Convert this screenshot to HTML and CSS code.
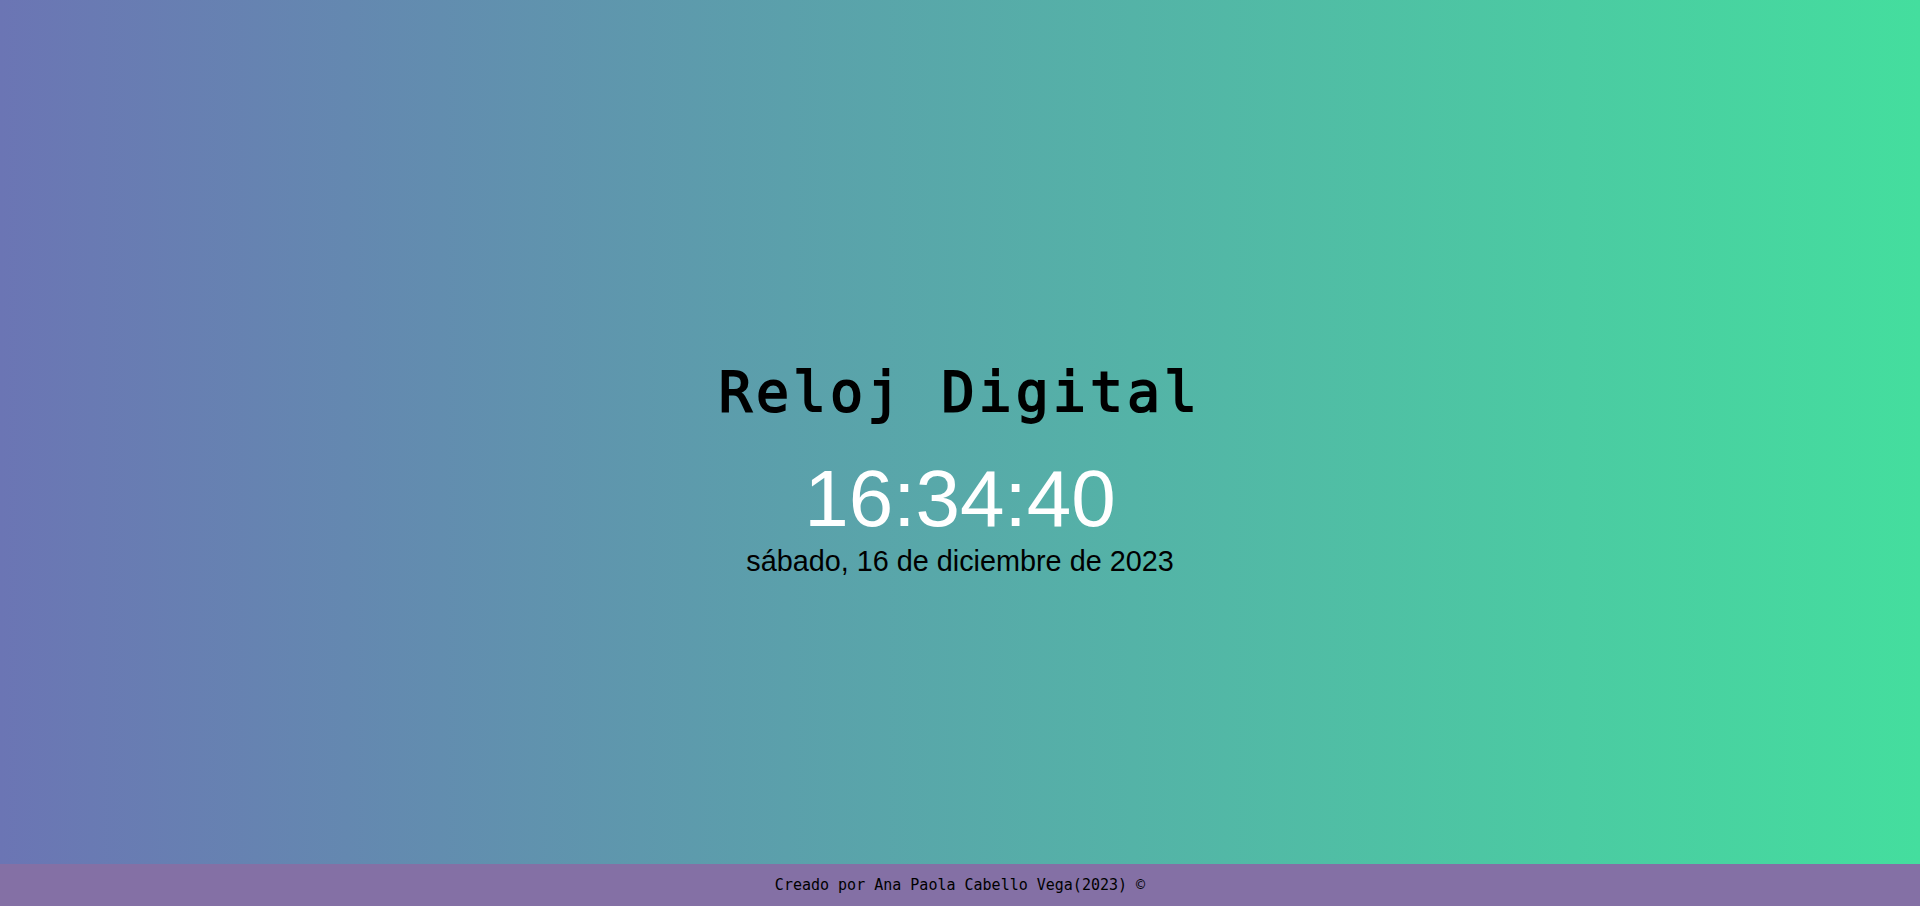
FILE: index.html
```html
<!DOCTYPE html>
<html lang="es">
<head>
<meta charset="utf-8">
<title>Reloj Digital</title>
<link rel="stylesheet" href="styles.css">
</head>
<body>
<main class="main">
  <h1 class="title">Reloj Digital</h1>
  <div class="time">16:34:40</div>
  <div class="date">sábado, 16 de diciembre de 2023</div>
</main>
<footer class="footer">Creado por Ana Paola Cabello Vega(2023) ©</footer>
</body>
</html>
```
FILE: styles.css
```css
html, body {
  margin: 0;
  padding: 0;
  height: 100%;
}
body {
  display: flex;
  flex-direction: column;
  font-family: "Liberation Sans", Arial, sans-serif;
}
.main {
  flex: 1;
  display: flex;
  flex-direction: column;
  align-items: center;
  justify-content: center;
  background: linear-gradient(to right, #6b75b4, #44de9e);
  padding-top: 73px;
}
.title {
  margin: 0 0 29px;
  font-family: "DejaVu Sans Mono", "Liberation Mono", monospace;
  font-size: 55px;
  font-weight: normal;
  -webkit-text-stroke: 1.8px #000;
  letter-spacing: 4px;
  line-height: 66px;
  color: #000;
}
.time {
  font-size: 80px;
  line-height: 90px;
  color: #fff;
}
.date {
  font-size: 28.8px;
  line-height: 34px;
  color: #000;
}
.footer {
  height: 42px;
  line-height: 42px;
  text-align: center;
  background: #8470a5;
  font-family: "DejaVu Sans Mono", "Liberation Mono", monospace;
  font-size: 15px;
  color: #000;
}
```
